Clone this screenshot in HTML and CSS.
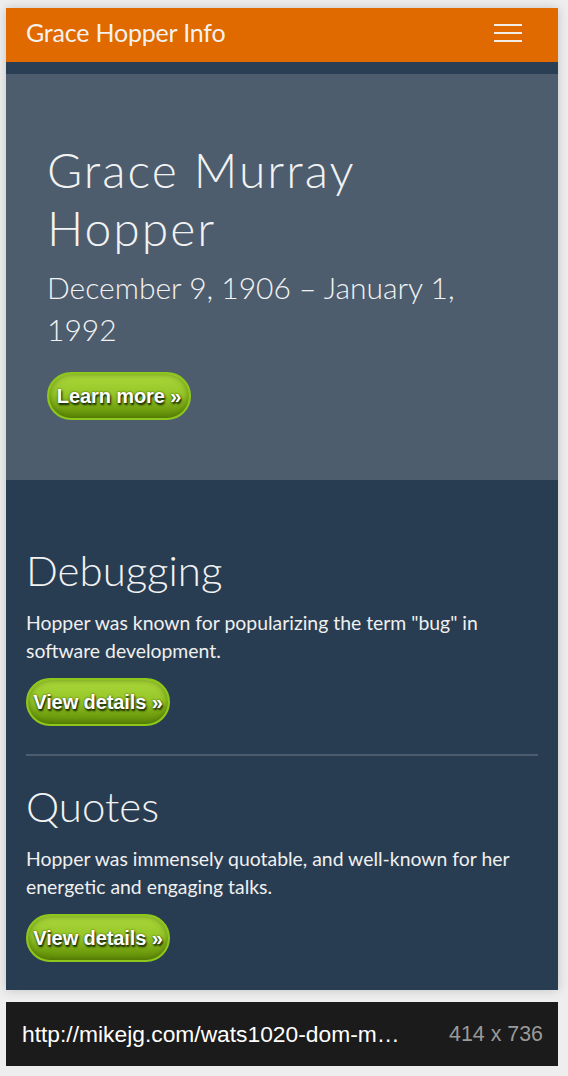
FILE: index.html
```html
<!DOCTYPE html>
<html>
<head>
<meta charset="utf-8">
<title>Grace Hopper Info</title>
<link rel="stylesheet" href="styles.css">
</head>
<body>
<div class="device">
  <nav class="navbar">
    <span class="brand">Grace Hopper Info</span>
    <span class="toggle" aria-label="Menu"><i></i><i></i><i></i></span>
  </nav>
  <div class="strip"></div>
  <header class="hero">
    <h1>Grace Murray Hopper</h1>
    <p class="dates">December 9, 1906 – January 1, 1992</p>
    <a class="btn" href="#">Learn more »</a>
  </header>
  <main class="features">
    <section class="feature">
      <h2>Debugging</h2>
      <p>Hopper was known for popularizing the term "bug" in software development.</p>
      <a class="btn" href="#">View details »</a>
    </section>
    <hr class="divider">
    <section class="feature">
      <h2>Quotes</h2>
      <p>Hopper was immensely quotable, and well-known for her energetic and engaging talks.</p>
      <a class="btn" href="#">View details »</a>
    </section>
  </main>
</div>
<div class="statusbar">
  <span class="url">http://mikejg.com/wats1020-dom-m…</span>
  <span class="size">414 x 736</span>
</div>
</body>
</html>
```
FILE: styles.css
```css
html, body {
  margin: 0;
  padding: 0;
  background: #eeeeee;
}
body {
  padding: 8px 10px 10px 6px;
  font-family: Lato, "Open Sans", sans-serif;
  color: #f3f3f3;
}
.device {
  width: 552px;
  box-shadow: 0 0 10px rgba(0,0,0,0.18);
}
.navbar {
  height: 54px;
  background: #e06900;
  display: flex;
  align-items: center;
  justify-content: space-between;
  padding: 0 36px 0 20px;
}
.brand {
  font-size: 25px;
  color: #f4f1ee;
  letter-spacing: -0.2px;
  margin-top: -6px;
}
.toggle {
  display: flex;
  flex-direction: column;
  gap: 6px;
  width: 28px;
  margin-top: -4px;
}
.toggle i {
  display: block;
  height: 2px;
  background: #f1ede9;
}
.strip {
  height: 12px;
  background: #2a3f54;
}
.hero {
  background: #4d5d6e;
  height: 406px;
  box-sizing: border-box;
  padding: 67px 90px 0 41px;
}
.hero h1 {
  margin: 0;
  font-weight: 300;
  font-size: 48px;
  line-height: 58px;
  letter-spacing: 2px;
  color: #f2f2f2;
}
.dates {
  margin: 9px 0 0 0;
  font-weight: 300;
  font-size: 30px;
  line-height: 42px;
  color: #f2f2f2;
}
.btn {
  display: inline-flex;
  align-items: center;
  justify-content: center;
  box-sizing: border-box;
  width: 144px;
  height: 48px;
  border-radius: 24px;
  border: 2px solid #8dc71b;
  background: linear-gradient(#abd93c 0%, #96c627 45%, #71a00f 80%, #5d8807 100%);
  box-shadow: inset 0 0 6px rgba(60,90,0,0.6);
  font-family: "Liberation Sans", Arial, sans-serif;
  font-weight: bold;
  font-size: 20px;
  letter-spacing: -0.1px;
  color: #ffffff;
  text-decoration: none;
  text-shadow: 1px 2px 2px rgba(10,25,0,0.95), 0 0 2px rgba(10,25,0,0.7);
}
.hero .btn {
  margin-top: 22px;
}
.features {
  background: #293d52;
  height: 510px;
  box-sizing: border-box;
  padding: 65px 20px 0 20px;
}
.feature h2 {
  margin: 0;
  font-weight: 300;
  font-size: 42px;
  line-height: 50px;
  color: #f2f2f2;
}
.feature p {
  margin: 14px 0 13px 0;
  font-size: 19.4px;
  line-height: 28px;
  color: #f0f0f0;
}
.divider {
  border: 0;
  height: 2px;
  background: #4d5d6e;
  margin: 28px 0 25px 0;
}
.statusbar {
  margin-top: 12px;
  width: 552px;
  height: 64px;
  background: #1b1b1b;
  display: flex;
  align-items: center;
  justify-content: space-between;
  box-sizing: border-box;
  padding: 0 15px 0 16px;
  font-family: "Liberation Sans", Arial, sans-serif;
}
.url {
  font-size: 22.8px;
  color: #ffffff;
}
.size {
  font-size: 21.4px;
  color: #9a9a9a;
}
```
